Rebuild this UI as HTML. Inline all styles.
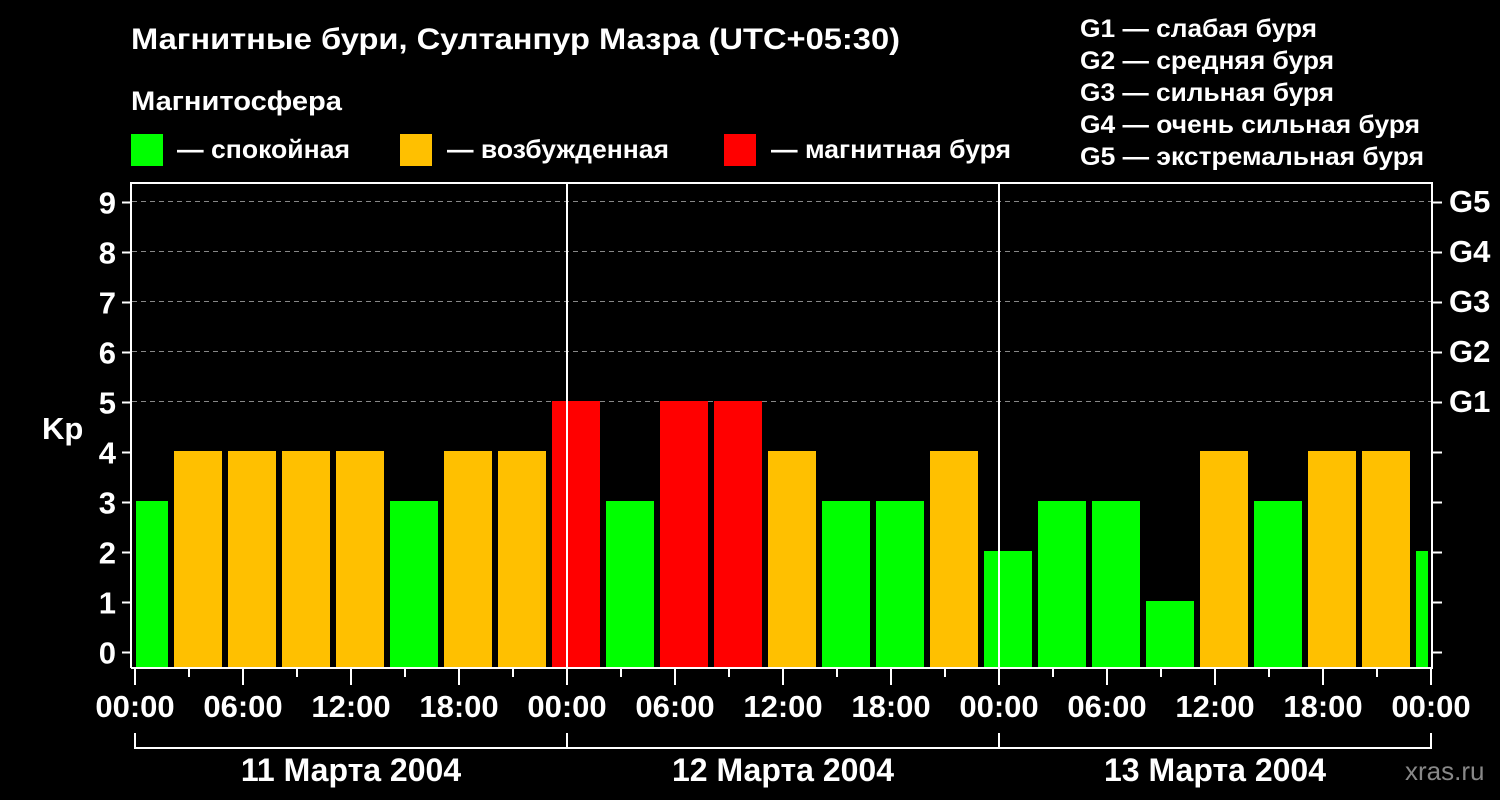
<!DOCTYPE html>
<html><head><meta charset="utf-8"><style>
html,body{margin:0;padding:0;background:#000;width:1500px;height:800px;overflow:hidden}
svg{display:block}
text{font-family:"Liberation Sans",sans-serif;font-weight:bold;fill:#fff}
</style></head><body>
<svg width="1500" height="800" xmlns="http://www.w3.org/2000/svg">
<rect width="1500" height="800" fill="#000"/>
<text x="131" y="49" font-size="30" textLength="769" lengthAdjust="spacingAndGlyphs">Магнитные бури, Султанпур Мазра (UTC+05:30)</text>
<text x="131" y="110" font-size="27" textLength="211" lengthAdjust="spacingAndGlyphs">Магнитосфера</text>
<rect x="131" y="134" width="32" height="32" fill="#00ff00"/>
<text x="177" y="158" font-size="26" textLength="173" lengthAdjust="spacingAndGlyphs">— спокойная</text>
<rect x="400" y="134" width="32" height="32" fill="#ffc000"/>
<text x="447" y="158" font-size="26" textLength="222" lengthAdjust="spacingAndGlyphs">— возбужденная</text>
<rect x="724" y="134" width="32" height="32" fill="#ff0000"/>
<text x="771" y="158" font-size="26" textLength="240" lengthAdjust="spacingAndGlyphs">— магнитная буря</text>
<g font-size="25">
<text x="1080" y="37" textLength="237" lengthAdjust="spacingAndGlyphs">G1 — слабая буря</text>
<text x="1080" y="69" textLength="254" lengthAdjust="spacingAndGlyphs">G2 — средняя буря</text>
<text x="1080" y="101" textLength="254" lengthAdjust="spacingAndGlyphs">G3 — сильная буря</text>
<text x="1080" y="133" textLength="340" lengthAdjust="spacingAndGlyphs">G4 — очень сильная буря</text>
<text x="1080" y="165" textLength="344" lengthAdjust="spacingAndGlyphs">G5 — экстремальная буря</text>
</g>
<g stroke="#888" stroke-width="1" stroke-dasharray="5,4">
<line x1="132" y1="201.5" x2="1432" y2="201.5"/>
<line x1="132" y1="251.5" x2="1432" y2="251.5"/>
<line x1="132" y1="301.5" x2="1432" y2="301.5"/>
<line x1="132" y1="351.5" x2="1432" y2="351.5"/>
<line x1="132" y1="401.5" x2="1432" y2="401.5"/>
</g>
<g id="bars"></g>
<g stroke="#fff" stroke-width="2" fill="none">
<polyline points="131,668 131,183 1432,183 1432,668 131,668"/>
<line x1="567" y1="183" x2="567" y2="668"/>
<line x1="999" y1="183" x2="999" y2="668"/>
</g>
<g stroke="#fff" stroke-width="2" id="ticks"></g>
<g font-size="31" text-anchor="end" id="ylab"></g>
<text x="42" y="439" font-size="31">Kp</text>
<g font-size="31">
<text x="1449" y="212">G5</text><text x="1449" y="262">G4</text><text x="1449" y="312">G3</text><text x="1449" y="362">G2</text><text x="1449" y="412">G1</text>
</g>
<g font-size="31" text-anchor="middle">
<text x="135" y="717">00:00</text><text x="243" y="717">06:00</text><text x="351" y="717">12:00</text><text x="459" y="717">18:00</text>
<text x="567" y="717">00:00</text><text x="675" y="717">06:00</text><text x="783" y="717">12:00</text><text x="891" y="717">18:00</text>
<text x="999" y="717">00:00</text><text x="1107" y="717">06:00</text><text x="1215" y="717">12:00</text><text x="1323" y="717">18:00</text>
<text x="1431" y="717">00:00</text>
<text x="351" y="781" font-size="32">11 Марта 2004</text><text x="783" y="781" font-size="32">12 Марта 2004</text><text x="1215" y="781" font-size="32">13 Марта 2004</text>
</g>
<text x="1405" y="780" font-size="26" style="fill:#888;font-weight:normal">xras.ru</text>
<g stroke="#fff" stroke-width="2" fill="none">
<polyline points="135,733 135,748 1431,748 1431,733"/>
<line x1="567" y1="733" x2="567" y2="748"/>
<line x1="999" y1="733" x2="999" y2="748"/>
</g>
</svg>
<script>
var ns="http://www.w3.org/2000/svg";
var v=[3,4,4,4,4,3,4,4,5,3,5,5,4,3,3,4,2,3,3,1,4,3,4,4,2];
var b=document.getElementById("bars");
function y(k){return 652-50*k;}
v.forEach(function(k,i){var x0=120+54*i,x1=x0+48;if(x0<136)x0=136;if(x1>1428)x1=1428;
var r=document.createElementNS(ns,"rect");r.setAttribute("x",x0);r.setAttribute("width",x1-x0);
r.setAttribute("y",y(k)-1);r.setAttribute("height",668-y(k)+1);
r.setAttribute("fill",k>=5?"#ff0000":k==4?"#ffc000":"#00ff00");b.appendChild(r);});
var t=document.getElementById("ticks"),yl=document.getElementById("ylab");
function ln(a,b2,c,d){var l=document.createElementNS(ns,"line");l.setAttribute("x1",a);l.setAttribute("y1",b2);l.setAttribute("x2",c);l.setAttribute("y2",d);t.appendChild(l);}
for(var k=0;k<=9;k++){var yy=y(k)+0.5;ln(122,yy,131,yy);ln(1432,yy,1442,yy);
var tx=document.createElementNS(ns,"text");tx.setAttribute("x",116);tx.setAttribute("y",yy+11);tx.textContent=k;yl.appendChild(tx);}
for(var i=0;i<=24;i++){var x=135+54*i;ln(x,668,x,i%2==0?685:677);}
</script>
</body></html>
